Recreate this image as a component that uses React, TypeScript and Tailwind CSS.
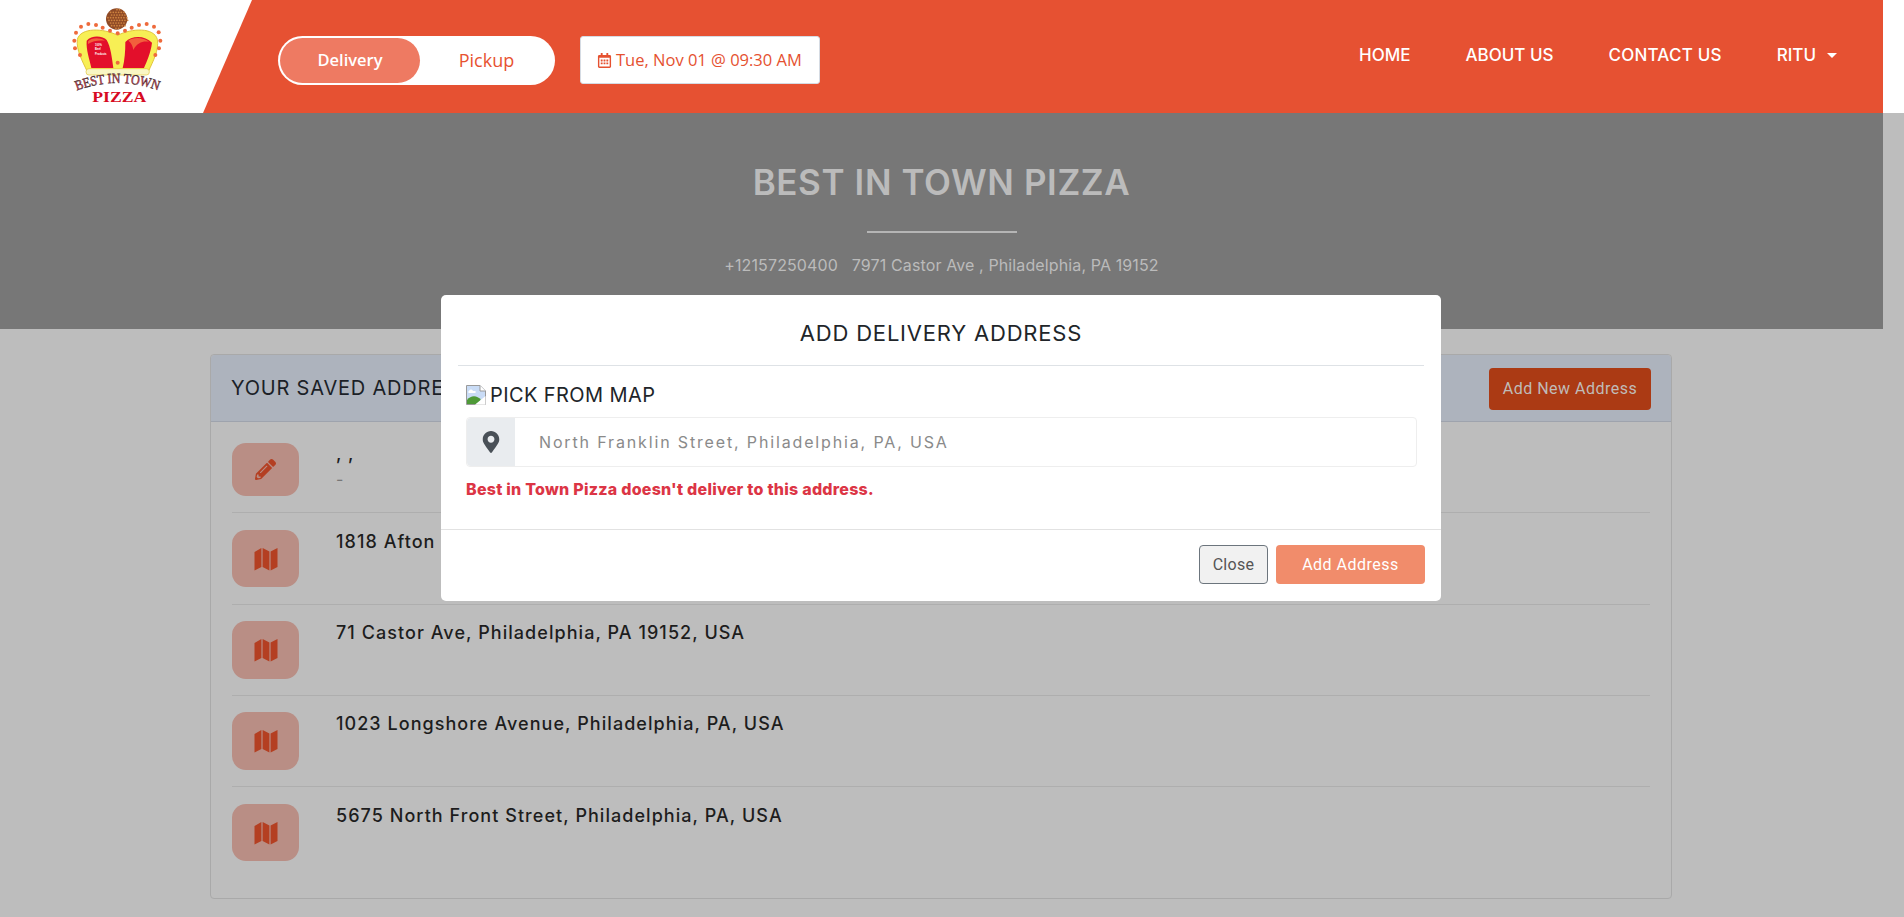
import React from "react";
import { FaPencilAlt, FaMapMarkerAlt, FaRegCalendarAlt } from "react-icons/fa";

function Logo() {
  const dots = [[93,80],[115,72],[138,75],[158,83],[180,92],[203,100],[225,92],[245,83],[267,75],[290,72],[312,80],[326,97],[331,122],[327,145],[316,165],[73,122],[78,98],[75,145],[90,165],[203,188]];
  const grain: number[][] = [];
  for (let x = 172; x <= 228; x += 8) {
    for (let y = 29; y <= 85; y += 8) {
      if ((x - 200) ** 2 + (y - 57) ** 2 < 900) grain.push([x + ((y / 8) % 2) * 3, y]);
    }
  }
  return (
    <svg viewBox="0 0 390 345" className="w-[130px] h-[115px] shrink-0 ml-[50px] mt-[2px]">
      <circle cx="200" cy="57" r="32" fill="#8f4a26" />
      {grain.map(([x, y], i) => (
        <circle key={i} cx={x} cy={y} r="2.6" fill="#cf8440" />
      ))}
      <path d="M112 215 C98 185 78 150 82 118 C92 82 160 84 203 106 C246 84 312 82 322 118 C328 150 308 185 295 215 Z" fill="#f7ef55" stroke="#e3c53c" strokeWidth="3" />
      <path d="M110 122 C125 104 160 108 170 120 C182 140 186 175 190 204 L124 204 C118 175 108 150 110 122 Z" fill="#e30f2b" />
      <path d="M226 126 C245 106 285 106 306 128 C302 160 290 185 282 204 L218 204 C224 180 226 155 226 126 Z" fill="#e30f2b" />
      <path d="M235 122 C250 110 282 112 298 126 C280 122 262 128 250 150 C248 135 242 128 235 122 Z" fill="#f2603c" />
      <path d="M114 124 C125 112 150 112 165 122 C148 120 128 122 114 132 Z" fill="#f2603c" />
      <text x="135" y="137" fill="#fff" fontFamily="'Liberation Sans', sans-serif" fontWeight="700" fontSize="8">100%</text>
      <text x="135" y="151" fill="#fff" fontFamily="'Liberation Sans', sans-serif" fontWeight="700" fontSize="8">Beef</text>
      <text x="135" y="165" fill="#fff" fontFamily="'Liberation Sans', sans-serif" fontWeight="700" fontSize="8">Products</text>
      <rect x="108" y="206" width="190" height="19" rx="9" fill="#f9f6c4" stroke="#e3c53c" strokeWidth="2" />
      {dots.map(([x, y], i) => (
        <circle key={i} cx={x} cy={y} r="6" fill="#ee6a3c" />
      ))}
      <path id="logo-arc" d="M80 272 Q 200 226 326 272" fill="none" />
      <text fill="#e6344a" stroke="#333" strokeWidth="1.4" fontFamily="'Liberation Serif', serif" fontSize="42">
        <textPath href="#logo-arc" textLength="250" lengthAdjust="spacingAndGlyphs">BEST IN TOWN</textPath>
      </text>
      <text x="127" y="306" fill="#d70a22" fontFamily="'Liberation Serif', serif" fontWeight="700" fontSize="44" textLength="162" lengthAdjust="spacingAndGlyphs">PIZZA</text>
    </svg>
  );
}

function MapGlyph() {
  return (
    <svg viewBox="0 0 24 24" className="w-[24px] h-[24px]" fill="currentColor">
      <path d="M0.5 5 L7.4 1 V20 L0.5 23.5 Z" />
      <path d="M8.6 1 L15.4 4.6 V23.5 L8.6 20 Z" />
      <path d="M16.6 4.6 L23.5 1 V20 L16.6 23.5 Z" />
    </svg>
  );
}

function BrokenImage() {
  return (
    <svg viewBox="0 0 20 20" className="w-5 h-5 shrink-0">
      <path d="M0.5 0.5H14L19.5 6V19.5H0.5Z" fill="#c9dcf6" stroke="#9a9a9a" />
      <path d="M14 0.5V6H19.5" fill="#fff" stroke="#9a9a9a" />
      <path d="M1 15C5 10 11 10 15 15L10 19H1Z" fill="#4f9a38" />
      <path d="M19.5 11L9 19.8H19.5Z" fill="#fff" />
      <path d="M3 6c1-2 3-2 4 0h2c1 0 1 2 0 2H3C2 8 2 6 3 6Z" fill="#fff" />
    </svg>
  );
}

const rows = [
  { text: "1818 Afton", cls: "pt-[17px] pb-[17px]", icon: "h-[57px]" },
  { text: "71 Castor Ave, Philadelphia, PA 19152, USA", cls: "pt-[16px] pb-[16px]", icon: "h-[58px]" },
  { text: "1023 Longshore Avenue, Philadelphia, PA, USA", cls: "pt-[16px] pb-[16px]", icon: "h-[58px]" },
  { text: "5675 North Front Street, Philadelphia, PA, USA", cls: "pt-[17px] pb-[36px]", icon: "h-[57px]" },
];

export default function App() {
  return (
    <div className="relative flex w-full h-[917px] overflow-hidden bg-[#bdbdbd] font-['Inter',sans-serif]">
      <div className="w-[1883px] shrink-0">
        <header className="h-[113px] flex items-center bg-[#e65132]">
          <div className="w-[252px] h-full bg-white flex items-center [clip-path:polygon(0_0,100%_0,203px_100%,0_100%)]">
            <Logo />
          </div>
          <div className="ml-[26px] mt-[8px] w-[277px] h-[49px] rounded-full bg-white flex items-center p-[2px] font-['Open_Sans',sans-serif]">
            <div className="w-[140px] h-full rounded-full bg-[#ee7a62] text-white text-[16.5px] font-semibold flex items-center justify-center">Delivery</div>
            <div className="flex-1 text-center text-[#e75231] text-[18px]">Pickup</div>
          </div>
          <div className="ml-[25px] mt-[7px] w-[240px] h-[48px] rounded-[3px] bg-white border border-[#d5dbe3] text-[#e55130] text-[16.5px] flex items-center pl-[16px] gap-[4px] font-['Open_Sans',sans-serif]">
            <FaRegCalendarAlt className="text-[15px] shrink-0" />
            <span className="whitespace-nowrap">Tue, Nov 01 @ 09:30 AM</span>
          </div>
          <nav className="ml-auto mr-[46px] -mt-[2px] flex items-center gap-[55px] text-white text-[17px] font-medium">
            <span>HOME</span>
            <span>ABOUT US</span>
            <span className="tracking-[0.2px]">CONTACT US</span>
            <span className="flex items-center gap-[11px]">
              RITU
              <span className="w-0 h-0 border-x-[5px] border-x-transparent border-t-[5px] border-t-white"></span>
            </span>
          </nav>
        </header>

        <section className="h-[216px] bg-[#777777] flex flex-col items-center text-[#bbbbbb]">
          <h1 className="mt-[47px] text-[35px] leading-[44px] font-semibold tracking-[0.6px]">BEST IN TOWN PIZZA</h1>
          <div className="mt-[27px] w-[150px] h-[2px] bg-[#b5b5b5]"></div>
          <p className="mt-[21px] text-[16px] leading-[22px] tracking-[0.12px] whitespace-pre">+12157250400   7971 Castor Ave , Philadelphia, PA 19152</p>
        </section>

        <div className="ml-[210px] mt-[25px] w-[1462px] h-[545px] rounded-[4px] border border-[#a9a9a9]">
          <div className="h-[67px] bg-[#adb3bd] border-b border-[#9ea3ad] flex items-center justify-between pl-[20px] pr-[20px] rounded-t-[4px]">
            <span className="text-[20px] tracking-[0.8px] text-[#1b1f27]">YOUR SAVED ADDRESSES</span>
            <button className="mt-[2px] w-[162px] h-[42px] rounded-[4px] bg-[#ab3a14] text-[#c0bcb8] text-[16px] font-['Roboto',sans-serif] tracking-[0.5px]">Add New Address</button>
          </div>
          <div className="px-[21px]">
            <div className="flex border-b border-[#aeaeae] pt-[21px] pb-[16px]">
              <div className="w-[67px] h-[53px] rounded-[14px] bg-[#b98e85] flex items-center justify-center text-[#b43f22] text-[21px]">
                <FaPencilAlt />
              </div>
              <div className="ml-[37px] text-[#1b1b1b]">
                <div className="text-[18px] leading-[22px] font-medium tracking-[1px]">, ,</div>
                <div className="mt-[2px] text-[#777] text-[16px] leading-[24px]">-</div>
              </div>
            </div>
            {rows.map((r, i) => (
              <div key={i} className={`flex ${i < 3 ? "border-b border-[#aeaeae]" : ""} ${r.cls}`}>
                <div className={`w-[67px] ${r.icon} rounded-[14px] bg-[#b98e85] flex items-center justify-center text-[#b43f22]`}>
                  <MapGlyph />
                </div>
                <div className="ml-[37px] mt-[1px] text-[18px] leading-[22px] font-medium tracking-[1.05px] text-[#1d1d1d]">{r.text}</div>
              </div>
            ))}
          </div>
        </div>
      </div>
      <div className="flex-1">
        <div className="h-[113px] bg-white"></div>
      </div>

      <div className="absolute left-[441px] top-[295px] w-[1000px] h-[306px] rounded-[5px] bg-white flex flex-col">
        <div className="mx-[17px] h-[71px] pt-[7px] border-b border-[#dee2e6] flex items-center justify-center text-[22px] tracking-[0.8px] text-[#212529]">
          ADD DELIVERY ADDRESS
        </div>
        <div className="px-[25px] h-[164px] pt-[18px] border-b border-[#e2e2e2]">
          <div className="flex items-center gap-[4px] h-[22px] text-[20px] tracking-[0.4px] text-[#212529]">
            <BrokenImage />
            <span>PICK FROM MAP</span>
          </div>
          <div className="mt-[11px] w-[951px] h-[50px] border border-[#eeeeee] rounded-[4px] flex items-center">
            <div className="w-[48px] h-full bg-[#e9ecef] rounded-l-[4px] flex items-center justify-center text-[#495057] text-[22px]">
              <FaMapMarkerAlt />
            </div>
            <span className="ml-[24px] text-[16px] tracking-[1.85px] text-[#8a8a8a]">North Franklin Street, Philadelphia, PA, USA</span>
          </div>
          <div className="mt-[12px] text-[16px] leading-[20px] font-extrabold tracking-[0.25px] text-[#dc3545]">Best in Town Pizza doesn't deliver to this address.</div>
        </div>
        <div className="flex justify-end gap-[8px] pr-[16px] pt-[15px] font-['Roboto',sans-serif] text-[16px] tracking-[0.3px]">
          <button className="w-[69px] h-[39px] rounded-[4px] border border-[#6c757d] bg-[#f1f1f1] text-[#555]">Close</button>
          <button className="w-[149px] h-[39px] rounded-[4px] bg-[#f18c6b] text-white tracking-[0.5px]">Add Address</button>
        </div>
      </div>
    </div>
  );
}
